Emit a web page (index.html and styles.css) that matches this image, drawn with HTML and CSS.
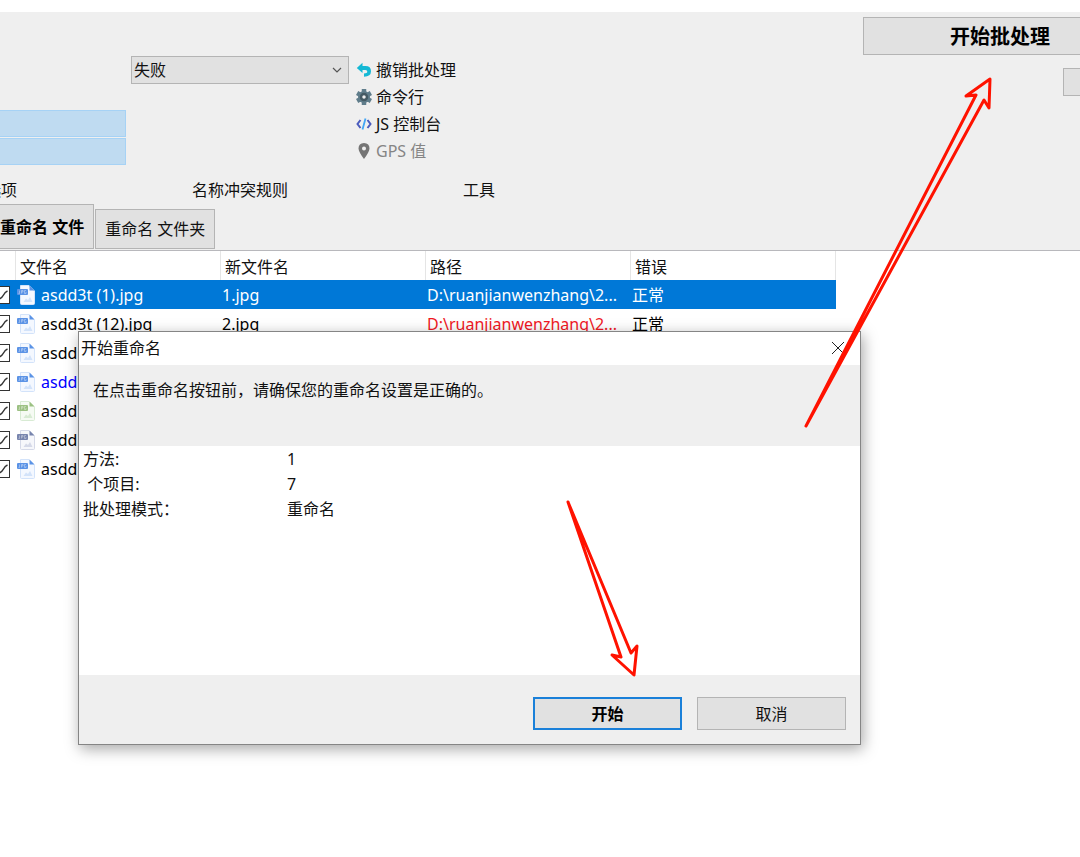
FILE: index.html
```
<!DOCTYPE html>
<html lang="zh-CN">
<head>
<meta charset="UTF-8">
<meta name="viewport" content="width=device-width, initial-scale=1.0">
<title>批量重命名</title>
<link rel="stylesheet" href="styles.css">
</head>
<body>

<!-- 文件图标 -->
<svg class="defs" width="0" height="0">
    <symbol id="file" viewBox="0 0 18 20">
        <path d="M3.5 .5H12L17.500 6V18.500Q17.500 19.500 16.500 19.500H4.500Q3.500 19.500 3.500 18.500Z" fill="var(--page)" stroke="var(--edge)"/>
        <path d="M12.500 .5L17.500 5.500H12.500Z" fill="var(--main)"/>
        <path d="M6.500 17L9 13.500L11 15L13 12L15.500 17Z" fill="var(--edge)"/>
        <rect x="0" y="4" width="11" height="6" rx="1" fill="var(--main)"/>
        <path d="M2.500 5.500V8.500H1.500M4.500 8.500V5.500H6V7H4.500M9 5.500H7.500V8.500H9V7" fill="none" stroke="#fff" stroke-width=".7" opacity=".5"/>
    </symbol>
</svg>

<div class="ribbon">
    <div class="groups">
        <div class="group options">
            <div class="group-body">
                <div class="option"></div>
                <div class="option"></div>
            </div>
            <div class="group-name">选项</div>
        </div>
        <div class="group conflict">
            <div class="group-body">
                <select id="rule"><option>失败</option></select>
            </div>
            <label class="group-name" for="rule">名称冲突规则</label>
        </div>
        <div class="group tools">
            <div class="group-body">
                <button class="tool">
                    <svg width="16" height="16" viewBox="0 0 16 16"><path d="M6.500 .8L.8 6L6.500 11V8H9.500Q11.300 8 11.300 9.700Q11.300 11.300 8 11.500V14.800Q15 14.500 15 9.300Q15 4.200 9.500 4.100H6.500Z" fill="#14b8d4"/></svg>
                    撤销批处理
                </button>
                <button class="tool">
                    <svg width="16" height="16" viewBox="0 0 16 16">
                        <g stroke="#607d8b" stroke-width="4.500"><path d="M8 0V16M1.100 4L14.900 12M1.100 12L14.900 4"/></g>
                        <circle cx="8" cy="8" r="6" fill="#607d8b"/>
                        <circle cx="8" cy="8" r="3" fill="#efefef" stroke="#455a64" stroke-width="2.500"/>
                    </svg>
                    命令行
                </button>
                <button class="tool">
                    <svg width="16" height="16" viewBox="0 0 16 16" fill="none" stroke-width="2"><path d="M4.500 4L1.500 8L4.500 12M11.500 4L14.500 8L11.500 12" stroke="#4a5bbd"/><path d="M9.500 2.500L6.500 13.500" stroke="#42a5f5" stroke-width="1.800"/></svg>
                    JS 控制台
                </button>
                <button class="tool" disabled>
                    <svg width="16" height="16" viewBox="0 0 16 16"><path fill-rule="evenodd" d="M8 0Q13.500 .3 13.500 5.500Q13.300 9 8 16Q2.700 9 2.500 5.500Q2.500 .3 8 0ZM8 3.500A2 2 0 1 0 8 7.500A2 2 0 1 0 8 3.500Z" fill="#757575"/></svg>
                    GPS 值
                </button>
            </div>
            <div class="group-name">工具</div>
        </div>
        <div class="actions">
            <button class="start-batch">开始批处理</button>
            <button class="more" aria-label="更多"></button>
        </div>
    </div>
    <div class="tabs">
        <button class="tab active">重命名 文件</button>
        <button class="tab">重命名 文件夹</button>
    </div>
</div>

<table class="files">
    <thead>
        <tr><th class="check-col"></th><th>文件名</th><th>新文件名</th><th>路径</th><th>错误</th></tr>
    </thead>
    <tbody>
        <tr class="selected">
            <td><input type="checkbox" aria-label="asdd3t (1).jpg" checked></td>
            <td><span class="name"><svg class="icon"><use href="#file"/></svg>asdd3t (1).jpg</span></td>
            <td>1.jpg</td>
            <td>D:\ruanjianwenzhang\2...</td>
            <td>正常</td>
        </tr>
        <tr>
            <td><input type="checkbox" aria-label="asdd3t (12).jpg" checked></td>
            <td><span class="name"><svg class="icon"><use href="#file"/></svg>asdd3t (12).jpg</span></td>
            <td>2.jpg</td>
            <td class="long">D:\ruanjianwenzhang\2...</td>
            <td>正常</td>
        </tr>
        <tr>
            <td><input type="checkbox" aria-label="asdd" checked></td>
            <td><span class="name"><svg class="icon"><use href="#file"/></svg>asdd</span></td>
            <td></td><td></td><td></td>
        </tr>
        <tr>
            <td><input type="checkbox" aria-label="asdd" checked></td>
            <td><span class="name changed"><svg class="icon"><use href="#file"/></svg>asdd</span></td>
            <td></td><td></td><td></td>
        </tr>
        <tr>
            <td><input type="checkbox" aria-label="asdd" checked></td>
            <td><span class="name"><svg class="icon png"><use href="#file"/></svg>asdd</span></td>
            <td></td><td></td><td></td>
        </tr>
        <tr>
            <td><input type="checkbox" aria-label="asdd" checked></td>
            <td><span class="name"><svg class="icon webp"><use href="#file"/></svg>asdd</span></td>
            <td></td><td></td><td></td>
        </tr>
        <tr>
            <td><input type="checkbox" aria-label="asdd" checked></td>
            <td><span class="name"><svg class="icon"><use href="#file"/></svg>asdd</span></td>
            <td></td><td></td><td></td>
        </tr>
    </tbody>
</table>

<div class="dialog" role="dialog" aria-labelledby="dialogTitle">
    <div class="title-bar">
        <span id="dialogTitle">开始重命名</span>
        <button class="close" aria-label="关闭"><svg width="12" height="12" viewBox="0 0 12 12"><path d="M0 0L12 12M12 0L0 12" stroke="#222"/></svg></button>
    </div>
    <p class="message">在点击重命名按钮前，请确保您的重命名设置是正确的。</p>
    <dl class="details">
        <dt>方法:</dt><dd>1</dd>
        <dt> 个项目:</dt><dd>7</dd>
        <dt>批处理模式：</dt><dd>重命名</dd>
    </dl>
    <div class="dialog-footer">
        <button class="button primary">开始</button>
        <button class="button">取消</button>
    </div>
</div>

<!-- 红色箭头标注 -->
<svg class="arrows" width="1080" height="857" viewBox="0 0 1080 857">
    <path d="M806 426L976 95L966 96L990 79L989 108L984 100Z"/>
    <path d="M568 502L621 657L612 655L634 675L637 646L631 653Z"/>
</svg>

</body>
</html>
```
FILE: styles.css
```
* {
    box-sizing: border-box;
}
body {
    position: relative;
    margin: 0;
    padding-top: 12px;
    min-height: 100vh;
    overflow: hidden;
    background-color: #fff;
    color: #111;
    font-family: "Noto Sans", "Noto Sans CJK SC", sans-serif;
    font-size: 16px;
    line-height: 24px;
}
button, select {
    font: inherit;
    color: inherit;
    border: 1px solid #b4b4b4;
    border-radius: 0;
    background-color: #e1e1e1;
    padding: 0;
}
.defs {
    position: absolute;
}

/* 工具栏 */
.ribbon {
    background-color: #efefef;
    border-bottom: 1px solid #b8b8bc;
}
.groups {
    display: flex;
    height: 192px;
}
.group {
    display: flex;
    flex-direction: column;
    flex: none;
}
.group-body {
    height: 166px;
    padding-top: 44px;
}
.group-name {
    text-align: center;
}
.options {
    width: 126px;
    margin-right: 5px;
}
.options .group-body {
    display: flex;
    flex-direction: column;
    gap: 1px;
    padding-top: 98px;
}
.options .group-name {
    display: flex;
    justify-content: flex-end;
    width: 17px;
    overflow: hidden;
    white-space: nowrap;
}
.option {
    height: 27px;
    border: 1px solid #a6d2f5;
    border-left: 0;
    background-color: #bfdbf1;
}
.conflict {
    width: 218px;
}
.conflict select {
    width: 100%;
    height: 28px;
    padding: 0 2px;
    appearance: none;
    background: #e1e1e1 url("data:image/svg+xml,%3Csvg xmlns='http://www.w3.org/2000/svg' width='10' height='6'%3E%3Cpath d='M1 1L5 5L9 1' fill='none' stroke='%23555' stroke-width='1.200'/%3E%3C/svg%3E") no-repeat right 6px center;
}
.tools {
    width: 246px;
    margin-left: 7px;
}
.tool {
    display: flex;
    align-items: center;
    gap: 4px;
    height: 27px;
    border: 0;
    background: none;
}
.tool:disabled {
    color: #858585;
}
.actions {
    width: 217px;
    margin-left: auto;
    padding-top: 5px;
    overflow: hidden;
}
.start-batch {
    display: block;
    width: 274px;
    height: 38px;
    padding-top: 2px;
    font-size: 20px;
    font-weight: bold;
    color: #000;
}
.more {
    display: block;
    width: 80px;
    height: 28px;
    margin: 13px 0 0 200px;
}
.tabs {
    display: flex;
    align-items: flex-end;
    gap: 1px;
    height: 46px;
    padding-bottom: 1px;
}
.tab {
    height: 40px;
    padding: 0 9px;
}
.tab.active {
    height: 45px;
    padding: 0 9px 0 0;
    border-left: 0;
    font-weight: bold;
    color: #000;
}

/* 文件列表 */
.files {
    width: 836px;
    table-layout: fixed;
    border-collapse: separate;
    border-spacing: 0;
}
.files th {
    height: 29px;
    padding: 2px 4px 0;
    border-right: 1px solid #e5e5e5;
    text-align: left;
    font-weight: normal;
}
.files .check-col {
    width: 16px;
}
.files td {
    height: 29px;
    padding: 0 1px;
    overflow: hidden;
    white-space: nowrap;
    color: #000;
}
.files td:first-child {
    padding: 0 6px 0 0;
    direction: rtl;
}
.files input {
    display: block;
    appearance: none;
    width: 18px;
    height: 18px;
    margin: 0;
    border: 1px solid #333;
    background-color: #fff;
}
.files input:checked {
    background-image: url("data:image/svg+xml,%3Csvg xmlns='http://www.w3.org/2000/svg' width='16' height='16'%3E%3Cpath d='M2 8L6 12Q9 11 10.500 8Q12 5 14.500 4' fill='none' stroke='%23333' stroke-width='1.500'/%3E%3C/svg%3E");
}
.files .selected td {
    background-color: #0078d7;
    color: #fff;
}
.files .long {
    color: #f01824;
}
.name {
    display: flex;
    align-items: center;
    gap: 6px;
}
.changed {
    color: #00f;
}
.icon {
    --main: #5b93e6;
    --edge: #d3e3fa;
    --page: #f4f8ff;
    width: 18px;
    height: 20px;
}
.icon.png {
    --main: #9cc183;
    --edge: #d8ebd4;
    --page: #f6fbf4;
}
.icon.webp {
    --main: #7885ae;
    --edge: #d5d9e8;
    --page: #f6f7fb;
}

/* 对话框 */
.dialog {
    position: absolute;
    left: 78px;
    top: 331px;
    width: 783px;
    border: 1px solid #858585;
    background-color: #fff;
    box-shadow: 2px 4px 14px rgba(0,0,0,0.35);
}
.title-bar {
    display: flex;
    justify-content: space-between;
    align-items: center;
    height: 33px;
    padding: 0 16px 2px 2px;
}
.close {
    display: flex;
    border: 0;
    background: none;
}
.message {
    height: 81px;
    margin: 0;
    padding: 13px 14px;
    background-color: #efefef;
}
.details {
    display: grid;
    grid-template-columns: 204px 1fr;
    grid-auto-rows: 25px;
    height: 229px;
    margin: 0;
    padding: 1px 4px;
    white-space: pre;
}
.details dd {
    margin: 0;
}
.dialog-footer {
    display: flex;
    justify-content: flex-end;
    gap: 15px;
    padding: 22px 14px 14px;
    background-color: #efefef;
}
.button {
    width: 149px;
    height: 33px;
}
.button.primary {
    border: 2px solid #1a80d9;
    font-weight: bold;
    color: #000;
}

.arrows {
    position: absolute;
    left: 0;
    top: 0;
    fill: none;
    stroke: #ff1200;
    stroke-width: 3;
    stroke-linejoin: round;
    pointer-events: none;
}
```
